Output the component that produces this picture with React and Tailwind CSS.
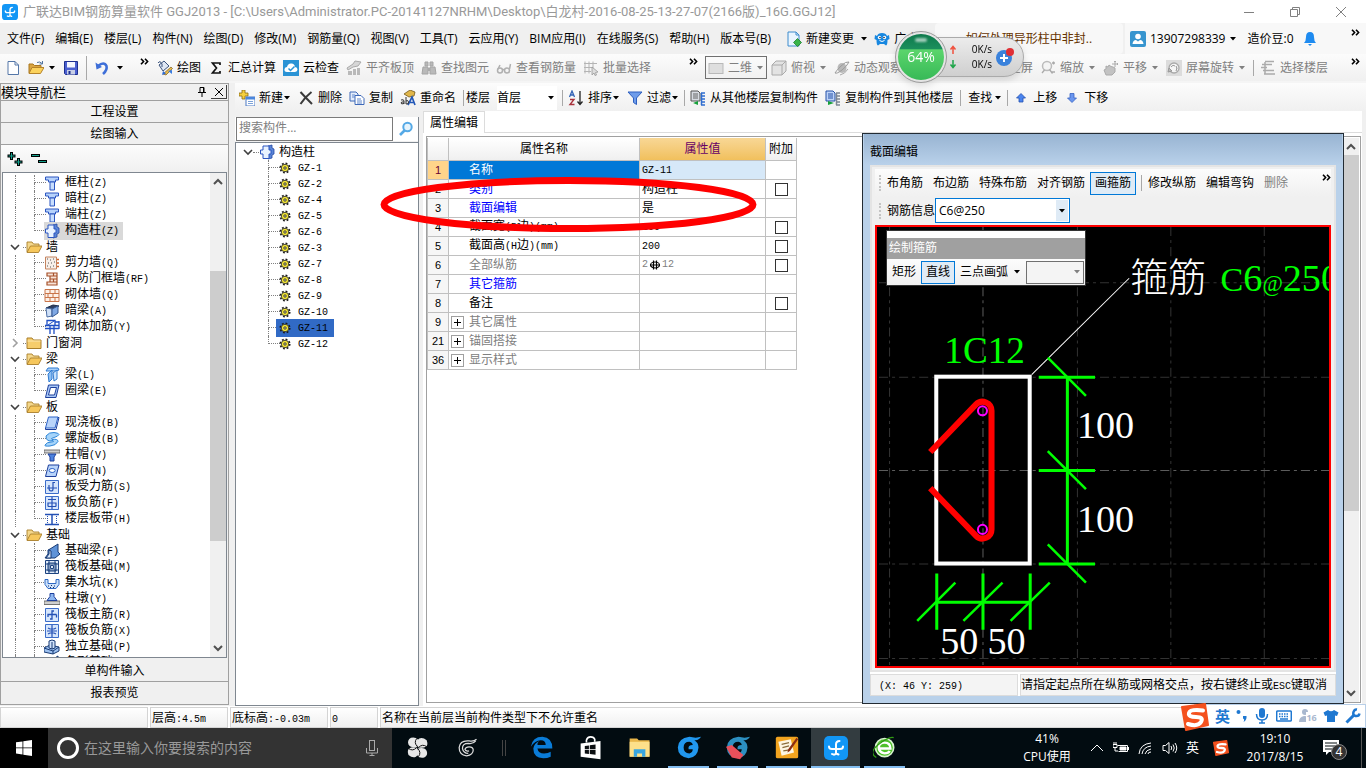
import React from "react";

const Caret = ({ className = "" }) => (
    <svg className={`w-2 h-1 shrink-0 ${className}`} viewBox="0 0 8 4" fill="currentColor">
        <path d="M1 0h6L4 3.5z" />
    </svg>
);

const More = ({ className = "" }) => (
    <button aria-label="更多" className={`shrink-0 ${className}`}>
        <svg className="w-[9px] h-[7px]" viewBox="0 0 9 7" fill="none" stroke="#000" strokeWidth="1.6">
            <path d="M1 .7l2.6 2.8L1 6.3M5 .7l2.6 2.8L5 6.3" />
        </svg>
    </button>
);

const Sep = ({ className = "" }) => <span className={`w-px h-4 bg-[#a8a8a8] shrink-0 ${className}`} />;

const Grip = () => <span className="w-0.5 h-4 border-l-2 border-dotted border-[#c4c4c4] shrink-0" />;

const Icon = ({ children, className = "w-4 h-4" }) => (
    <svg className={`shrink-0 ${className}`} viewBox="0 0 16 16" fill="none">
        {children}
    </svg>
);

/* Chinese runs at 12px, ascii runs in a half-width mono face */
const Song = ({ children }) =>
    String(children).split(/([\x20-\x7e]+)/).filter(Boolean).map((part, i) =>
        /^[\x20-\x7e]/.test(part)
            ? <span key={i} className="font-['Liberation_Mono',monospace] text-[10px]">{part}</span>
            : <React.Fragment key={i}>{part}</React.Fragment>
    );

const Tool = ({ icon, label, caret, disabled }) => (
    <button className={`flex items-center gap-1 shrink-0 whitespace-nowrap ${disabled ? "text-[#808080]" : "text-black"}`}>
        {icon && <Icon>{icon}</Icon>}
        {label}
        {caret && <Caret />}
    </button>
);

const AppLogo = ({ className }) => (
    <svg className={className} viewBox="0 0 24 24" fill="none" stroke="#fff" strokeWidth="2" strokeLinecap="round">
        <rect width="24" height="24" rx="5" fill="#1296f5" stroke="none" />
        <path d="M12 17.500V8.500q0-3.500 3.500-3.500M5 10.500q0 2.500 3 2.500h8q3 0 3-2.500M12 17.500q-1.500 2-4 .5M12 17.500l2.500 1" />
    </svg>
);

const art = {
    newFile: <><path d="M3 1.500h7l3.500 3.500v9.500H3z" fill="#fff" stroke="#5577a8" /><path d="M10 1.500V5h3.500" stroke="#5577a8" /></>,
    open: <><path d="M1 13V4h4l1.500 1.500H13V8" fill="#d9a441" stroke="#a9761f" /><path d="M1 13.500L4 7.500h12l-3.500 6z" fill="#fbd25c" stroke="#b5832a" /><path d="M9 2.500q3-1.500 5 1M14.500 1v3h-3" stroke="#51749f" /></>,
    save: <><path d="M1.500 1.500h13v13h-12l-1-1z" fill="#4a5fd0" stroke="#1d2f8f" /><path d="M4 2h8v5.500H4z" fill="#f3f6ff" /><path d="M4 10h8v4.500H4z" fill="#c8cfe6" /><path d="M5.500 11h2v3h-2z" fill="#1d2f8f" /></>,
    undo: <><path d="M4 6q6-5 8.500 0 1 4-3.500 8" stroke="#3e6fd8" strokeWidth="2.600" /><path d="M1.500 2.500l1 7 5.500-2.500z" fill="#3e6fd8" /></>,
    paint: <><path d="M2 5l5-4 5 5-6 5z" fill="#dfe7f4" stroke="#3b537d" /><path d="M1 3q2-3 4 1v3" stroke="#3b537d" /><path d="M6 14l8-7 1.500 1.500L9 15z" fill="#e6b94c" stroke="#7a5c1c" strokeWidth=".7" /><path d="M5 15l1-4 3 2.500z" fill="#2f6cd6" /><path d="M11 11l4-1v4z" fill="#3b7de0" /></>,
    sigma: <path d="M12 5V3H4.500l4 5-4 5H12v-2" stroke="#111" strokeWidth="1.700" />,
    cloud: <><rect width="16" height="16" fill="#2a93d5" /><path d="M4 12q-3 0-2.500-3 .5-2 2.500-2 1-4 4.500-3.500 3 .3 3.500 3.500 2.500.3 2.500 2.500T12 12z" fill="#fff" /><path d="M5.500 8.500l2 2 4-4" stroke="#2a93d5" strokeWidth="1.500" /></>,
    slabTop: <><path d="M1 8l6-4 2-3 6 1-3 4-5 1-5 3z" fill="#d6d6d6" stroke="#aaa" /><path d="M2 11h4v4H2zM7 9h3v6H7zM11 8h3v7h-3z" fill="#b9b9b9" /></>,
    binoc: <><path d="M4 2h3v4H4zM9 2h3v4H9zM2 7h5v7H1zM9 7h5l1 7H9z" fill="#b9b9b9" stroke="#a5a5a5" /><path d="M7 8h2v3H7z" fill="#aaa" /></>,
    glasses: <g stroke="#b0b0b0" strokeWidth="1.500"><circle cx="4" cy="10.500" r="2.500" /><circle cx="11" cy="10.500" r="2.500" /><path d="M6.500 10q1-1 2 0M2 9l2-4M13.500 9l1-5" /></g>,
    batch: <><path d="M2 1.500v12M6 1.500v12M10 1.500v7M1 3.500h13M1 7.500h9M1 11.500h7" stroke="#b4b4b4" /><path d="M9 7l6 5-2.500.5 1 2.500-1.500.5-1-2.500L9 15z" fill="#ddd" stroke="#999" strokeWidth=".8" /></>,
    flat: <rect x="1" y="3.500" width="14" height="10" fill="#dedede" stroke="#b9b9b9" />,
    cube: <><path d="M1 5l4-4h10v10l-4 4H1z" fill="#e3e3e3" stroke="#aaa" /><path d="M1 5h10v10M11 5l4-4" stroke="#aaa" /></>,
    orbit: <><ellipse cx="8" cy="8" rx="4.500" ry="5" fill="#b8b8b8" /><path d="M1 13q2 1 7-3t7-8q-3-1-8 4t-6 7z" stroke="#9c9c9c" /><path d="M6 15q5-1 8-6" stroke="#aaa" /></>,
    full: <path d="M1 1h14v12H1zM4 4h8v6H4z" stroke="#aaa" />,
    zoom: <><circle cx="7" cy="6" r="4.500" fill="#f4f4f4" stroke="#bbb" strokeWidth="1.500" /><path d="M4.500 10l-2.500 3M12 3h3M13.500 1.500v3M11 12h4M9.500 9.500l3 4" stroke="#aaa" strokeWidth="1.300" /></>,
    pan: <><path d="M3 15l-2-5 2-1V6l2 1 1-2 2 1.500L10 7l2 1v4l-3 3z" fill="#c2c2c2" stroke="#aaa" /><path d="M12 1v6M9 4h6M11 2l1-1 1 1M14 3l1 1-1 1" stroke="#aaa" /></>,
    rotate: <><path d="M0 0h16v16H0z" fill="#dcdcdc" /><circle cx="8" cy="8" r="5" fill="#f5f5f5" stroke="#aaa" strokeWidth="1.300" /><path d="M2 12l1-4 3 3zM10 6q2 2 0 5" fill="#bbb" stroke="#999" /><path d="M5 7q2-3 4-1" stroke="#999" /></>,
    floors: <path d="M5 1.500h9M2 4.500h10M1 7.500h6M3 10.500h11M4 14h11M5 2v12" stroke="#ababab" strokeWidth="1.500" />,
    create: <><path d="M3 0h3v3h3v3H6v3H3V6H0V3h3z" fill="#f5cf3f" stroke="#8c6a12" strokeWidth=".8" /><path d="M7 7h9v9H7z" fill="#fff" stroke="#4a78c4" /><path d="M7 7h9v2.500H7z" fill="#4a86dd" /><path d="M9 11.500h5M9 13.500h5" stroke="#7ba1d8" /></>,
    remove: <path d="M2.500 2Q7 7 14 14M13.500 2Q7 7 2.500 14" stroke="#3a3a3a" strokeWidth="2" />,
    copy: <><path d="M1 2h6l2 2v7H1z" fill="#e4edfb" stroke="#3d68b8" /><path d="M6 5.500h6l3 3v6H6z" fill="#fff" stroke="#3d68b8" /><path d="M8 9h4M8 11h5M8 13h5M3 5h3M3 7h3" stroke="#5f86cb" /></>,
    rename: <><path d="M4 4l6-4 5 2-1 4-5 1z" fill="#e0b64a" stroke="#74581a" strokeWidth=".8" /><path d="M8 15l4-8 3 8M9.500 12.500h4" stroke="#2358b8" strokeWidth="1.700" /><path d="M1 10q3-1 3 1v3M4 12q-3-.5-3 1t3 .5M6 7v7q3 .5 2.500-2T6 11" stroke="#333" /></>,
    sort: <><path d="M1.500 7L4 1l2.500 6M2.500 5h3" stroke="#3162b5" strokeWidth="1.300" /><path d="M2 9.500h4l-4 5h4.500" stroke="#a8323c" strokeWidth="1.400" /><path d="M12 1v13M9.500 11.500L12 14.500l2.500-3" stroke="#222" strokeWidth="1.300" /></>,
    funnel: <path d="M1 2h14l-5.500 6v6.500l-3-2V8z" fill="#6e9cea" stroke="#2d5fc0" />,
    copyFrom: <><path d="M1 1h7l2 2v8H1z" fill="#d7dbe2" stroke="#555" /><path d="M3 4h5M3 6h5M3 8h5" stroke="#666" /><path d="M11 3h4M11 6h4M11 9h4M11 12h4M11.500 3v12M11 15h4" stroke="#2f6dd0" strokeWidth="1.500" /><path d="M8 11v4l-5-2z" fill="#16a03a" /></>,
    copyTo: <><path d="M1 1h7l2 2v8H1z" fill="#bcd2f7" stroke="#2450a8" /><path d="M3 4h5M3 6h5M3 8h5" stroke="#2450a8" /><path d="M11 3h4M11 6h4M11 9h4M11 12h4M11.500 3v12M11 15h4" stroke="#7d8794" strokeWidth="1.500" /><path d="M3 11v4l6-2z" fill="#16a03a" /></>,
    up: <path d="M8 3.500l4.500 4.500H10v4H6V8H3.500z" fill="#4a84ee" stroke="#2450b0" strokeWidth=".8" />,
    down: <path d="M8 12.500L3.500 8H6V3.500h4V8h2.500z" fill="#6a96ee" stroke="#3763c4" strokeWidth=".8" />,
    docAdd: <><path d="M2 1h8l3 3v11H2z" fill="#e9f5ff" stroke="#3f8ccd" /><path d="M10 1v3h3" stroke="#3f8ccd" /><path d="M11.500 7.500l4 4-4 4-4-4z" fill="#39b54a" stroke="#1d7e2c" strokeWidth=".8" /></>,
    robot: <><path d="M3 5Q4 2 8 2t5 3l2-1 .5 4-2 1q0 5-1.500 5.500L10 13H6l-2 1.500Q2.500 14 2.500 9l-2-1L1 4z" fill="#1787e0" /><circle cx="5.500" cy="6.500" r="1.700" fill="#fff" /><circle cx="10.500" cy="6.500" r="1.700" fill="#fff" /><circle cx="6" cy="6.500" r=".8" fill="#123" /><circle cx="10" cy="6.500" r=".8" fill="#123" /><path d="M5.500 9.500q2.500 2 5 0" stroke="#fff" /></>,
    person: <><rect width="16" height="16" rx="2" fill="#3795cf" /><circle cx="8" cy="5.500" r="2.800" fill="#fff" /><path d="M2.500 13q.5-4 3.500-4l2 1.500L10 9q3 0 3.500 4z" fill="#fff" /></>,
    bell: <><path d="M8 1q4 0 4 5 0 4 2 6H2q2-2 2-6 0-5 4-5z" fill="#1e8bf0" /><path d="M6 13h4l-2 2z" fill="#1e8bf0" /></>,

    folderOpen: <><path d="M1 13V3h5l1.500 2H13v3" fill="#f4d78b" stroke="#a97f2b" strokeWidth=".9" /><path d="M1 13.500L4.500 7H16l-3.500 6.500z" fill="#f6c75c" stroke="#a97f2b" strokeWidth=".9" /></>,
    folder: <><path d="M1 13.500V3h5l1.500 2H15v8.500z" fill="#f6cd6c" stroke="#a97f2b" /><path d="M1.500 6h13" stroke="#fbe7b2" /></>,
    column: <><path d="M1.500 2h13v3h-3v2h-7V5h-3z" fill="#b6d2fb" stroke="#2b55c0" /><path d="M6 7h4.500v8H6z" fill="#c8defd" stroke="#2b55c0" /></>,
    tieColumn: <><path d="M9 2l4-1v3l2 1v5l-2 1v3l-4 1" fill="#5b86d6" stroke="#2347a5" strokeWidth=".8" /><path d="M4 2h6v4h2v4h-2v4.500H4V10H1.500V6H4z" fill="#e8f2ff" stroke="#2b55c0" /></>,
    shearWall: <><path d="M1.500 2h11v12h-11z" fill="#f7efe9" stroke="#c4835e" /><path d="M3 4h1M6 5h1M9 4h1M4 8h1M7 8h1M10 7h1M3 11h1M6 12h1M9 11h1" stroke="#555" /><path d="M13 4.500h2M13 8h2M13 11.500h2" stroke="#d0632c" strokeWidth="1.500" /></>,
    airWall: <path d="M3 2h10v12H3v-3h3V5H3zM6 5h7M6 8h7M6 11h7M9.500 2v3M9.500 8v3" fill="#f8e3d6" stroke="#a6512a" strokeWidth="1.200" />,
    brick: <path d="M1 2.500h14v12H1zM1 6.500h14M1 10.500h14M6 2.500v4M11 2.500v4M4 6.500v4M9 6.500v4M6 10.500v4M11 10.500v4" fill="#fdf0e7" stroke="#c9754a" />,
    hidBeam: <><path d="M2 5l7-3 6 1-7 3z" fill="#2d3f63" stroke="#1e2b46" /><path d="M2 5l6 1v7l-5 1z" fill="#cfe0f7" stroke="#4c6ea6" /><path d="M8 6l6-3v7l-6 4z" fill="#7fa8e4" stroke="#34578f" /></>,
    brickBar: <><path d="M3 1.500h8v5H3zM1 9.500h14M1 6.500h14M6 6v9M10 6v9M11 3h4M15 2v8" stroke="#1f4fc4" strokeWidth="1.300" /><path d="M4 6l6-4" stroke="#1f4fc4" /></>,
    beam: <><path d="M2 4l2-3h10l1 2-4 1z" fill="#a9d0fa" stroke="#2f7ad0" /><path d="M4 7l4-4v9l-3 3z" fill="#8cc0f6" stroke="#2f7ad0" /><path d="M9 6l4-3v9l-3 2z" fill="#c9e3fd" stroke="#2f7ad0" /></>,
    ringBeam: <path d="M4.500 2H15l-3 12.500H1.500zM6.500 4.500L4.500 12h6l2-7.500z" fill="#a9c8f6" stroke="#1d3f9c" fillRule="evenodd" />,
    slab: <><path d="M4.500 2H14l-3 11H1.500z" fill="#b9d4fa" stroke="#2b62c8" /><path d="M1.500 13v1.500H12l3-12H14" stroke="#1d3f9c" /></>,
    spiral: <path d="M2 5q3-4 8-3.500t5 2q-1 2-5 3t-2 2q6-1 6 2-2 4-8 4.500t-5-1q2-3 6-3t2-1.500q-7 2-7-4.500z" fill="#a5d4fa" stroke="#2f86d8" />,
    cap: <><path d="M0 3h16v3H0z" fill="#cfcfcf" stroke="#555" strokeWidth=".8" /><path d="M4 7h8l-2 3v4H6v-4z" fill="#4c83df" stroke="#1d3f9c" /></>,
    hole: <><path d="M4.500 2H15l-3 11.500H1.500z" fill="#b9d4fa" stroke="#1d3f9c" /><ellipse cx="8.200" cy="7.500" rx="3" ry="2" fill="#fff" stroke="#2b62c8" /></>,
    barPlate: <><path d="M1.500 1.500h13v13h-13z" fill="#d6e6fc" stroke="#3b6cc9" /><path d="M3 9h10M5 6v3q0 3 2 3t2-2V3.500h2" stroke="#2451b5" strokeWidth="1.200" /></>,
    barNeg: <><path d="M1.500 1.500h13v13h-13z" fill="#d6e6fc" stroke="#3b6cc9" /><path d="M8 2v12M4 4.500h8M4 11.500h8M4 7.500v4M12 7.500v4M4 8h8" stroke="#2451b5" strokeWidth="1.200" /></>,
    strip: <><path d="M1 3.500h14M1 13.500h14" stroke="#2451b5" strokeWidth="1.600" /><path d="M3.500 5v8M12.500 5v8" stroke="#2451b5" strokeDasharray="1 1" /><path d="M8 4v9" stroke="#2451b5" strokeWidth="1.500" /></>,
    footBeam: <><path d="M6 6l8-5v8l2 2-5 4H1l3-4V7z" fill="#5f93d8" stroke="#193b75" /><path d="M5 7l2 1v7H2l3-4z" fill="#d9e8fb" stroke="#193b75" /></>,
    raft: <path d="M1.500 1.500h13v13h-13zM4 4h8v8H4zM6.500 6.500h3v3h-3zM1 5h14M1 11h14M5 1v14M11 1v14" fill="#dfeaf8" stroke="#1c427f" />,
    pit: <><path d="M1 4.500h3v4h8v-4h3v5l-3 4H4l-3-4z" fill="#cde2fb" stroke="#2d68c4" /><path d="M4 11h1M7 10.500h1M10 11h1M6 12.500h1M9 12.500h1" stroke="#1a2f66" /></>,
    pier: <><path d="M0 10h16v3.500H0z" fill="#cfcfcf" stroke="#555" strokeWidth=".8" /><path d="M6 2.500h4v3l3 4H3l3-4z" fill="#8db6f0" stroke="#1d3f9c" /></>,
    rebar: <><path d="M1.500 1.500h13v13h-13z" fill="#d6e6fc" stroke="#3b6cc9" /><path d="M4 10V7.500h8.500M12.500 7.500v3M10 4H8v8H6" stroke="#2451b5" strokeWidth="1.300" /></>,
    rebarNeg: <><path d="M1.500 1.500h13v13h-13z" fill="#d6e6fc" stroke="#3b6cc9" /><path d="M8 2v12M4 5l2 1h4l2-1M4 11l2-1h4l2 1M3 8h10" stroke="#2451b5" strokeWidth="1.200" /></>,
    pad: <><path d="M0 9l6-3 9 2v4l-6 3-9-2z" fill="#9cc0ef" stroke="#193b75" /><path d="M5 2l3-1 3 1v7l-3 1-3-1zM8 3v7" fill="#cfe2fb" stroke="#193b75" /><path d="M0 9l9 3 6-4M9 12v3" stroke="#193b75" /></>,
    gear: <><circle cx="8" cy="8" r="6.200" stroke="#1a1a1a" strokeWidth="2.400" strokeDasharray="2.400 2.470" /><circle cx="8" cy="8" r="5" fill="#f2e534" stroke="#333" strokeWidth="1.200" /><circle cx="8" cy="8" r="1.600" fill="#fff9a0" stroke="#333" strokeWidth="1.300" /></>,
};

const menus = ["文件(F)", "编辑(E)", "楼层(L)", "构件(N)", "绘图(D)", "修改(M)", "钢筋量(Q)", "视图(V)", "工具(T)", "云应用(Y)", "BIM应用(I)", "在线服务(S)", "帮助(H)", "版本号(B)"];

const moduleTree = [
    { label: "框柱(Z)", icon: "column" },
    { label: "暗柱(Z)", icon: "column" },
    { label: "端柱(Z)", icon: "column" },
    { label: "构造柱(Z)", icon: "tieColumn", active: true, last: true },
    { label: "墙", group: "open" },
    { label: "剪力墙(Q)", icon: "shearWall" },
    { label: "人防门框墙(RF)", icon: "airWall" },
    { label: "砌体墙(Q)", icon: "brick" },
    { label: "暗梁(A)", icon: "hidBeam" },
    { label: "砌体加筋(Y)", icon: "brickBar", last: true },
    { label: "门窗洞", group: "closed" },
    { label: "梁", group: "open" },
    { label: "梁(L)", icon: "beam" },
    { label: "圈梁(E)", icon: "ringBeam", last: true },
    { label: "板", group: "open" },
    { label: "现浇板(B)", icon: "slab" },
    { label: "螺旋板(B)", icon: "spiral" },
    { label: "柱帽(V)", icon: "cap" },
    { label: "板洞(N)", icon: "hole" },
    { label: "板受力筋(S)", icon: "barPlate" },
    { label: "板负筋(F)", icon: "barNeg" },
    { label: "楼层板带(H)", icon: "strip", last: true },
    { label: "基础", group: "open" },
    { label: "基础梁(F)", icon: "footBeam" },
    { label: "筏板基础(M)", icon: "raft" },
    { label: "集水坑(K)", icon: "pit" },
    { label: "柱墩(Y)", icon: "pier" },
    { label: "筏板主筋(R)", icon: "rebar" },
    { label: "筏板负筋(X)", icon: "rebarNeg" },
    { label: "独立基础(P)", icon: "pad" },
    { label: "条形基础(T)", icon: "footBeam" },
];

const components = ["GZ-1", "GZ-2", "GZ-4", "GZ-5", "GZ-6", "GZ-3", "GZ-7", "GZ-8", "GZ-9", "GZ-10", "GZ-11", "GZ-12"];

const properties = [
    { no: 1, name: "名称", value: "GZ-11", selected: true },
    { no: 2, name: "类别", value: "构造柱", check: true, tone: "text-[#0000ff]" },
    { no: 3, name: "截面编辑", value: "是", tone: "text-[#0000ff]" },
    { no: 4, name: "截面宽(B边)(mm)", value: "100", check: true },
    { no: 5, name: "截面高(H边)(mm)", value: "200", check: true },
    { no: 6, name: "全部纵筋", value: "rebar", check: true, tone: "text-[#808080]" },
    { no: 7, name: "其它箍筋", value: "", tone: "text-[#0000ff]" },
    { no: 8, name: "备注", value: "", check: true },
    { no: 9, name: "其它属性", value: "", fold: true, tone: "text-[#808080]" },
    { no: 21, name: "锚固搭接", value: "", fold: true, tone: "text-[#808080]" },
    { no: 36, name: "显示样式", value: "", fold: true, tone: "text-[#808080]" },
];

const Chevron = ({ open = true }) => (
    <svg className="w-2.5 h-2.5 shrink-0" viewBox="0 0 10 10" fill="none" strokeWidth="1.600">
        {open ? <path d="M1 3l4 4 4-4" stroke="#404040" /> : <path d="M3 1l4 4-4 4" stroke="#a0a0a0" />}
    </svg>
);

const Branch = ({ last }) => (
    <span className="flex w-3 h-4 flex-col shrink-0">
        <span className="h-2 border-b border-l border-dotted border-[#808080]" />
        {!last && <span className="flex-1 border-l border-dotted border-[#808080]" />}
    </span>
);

const ScrollBar = ({ thumb }) => (
    <div className="w-4 shrink-0 flex flex-col items-center bg-[#f0f0f0]">
        <svg className="w-4 h-[17px]" viewBox="0 0 16 17" fill="none" stroke="#505050" strokeWidth="2"><path d="M4 11l4-4 4 4" /></svg>
        <div className="flex-1 w-full flex flex-col">{thumb}</div>
        <svg className="w-4 h-[17px]" viewBox="0 0 16 17" fill="none" stroke="#505050" strokeWidth="2"><path d="M4 6l4 4 4-4" /></svg>
    </div>
);

const TitleBar = () => (
    <header className="h-[23px] shrink-0 flex items-center bg-white pl-0.5 pr-5 text-[#999]">
        <AppLogo className="w-4 h-4" />
        <h1 className="ml-[5px] flex-1 truncate text-[13px] font-['Roboto','Noto_Sans_CJK_SC',sans-serif]">广联达BIM钢筋算量软件 GGJ2013 - [C:\Users\Administrator.PC-20141127NRHM\Desktop\白龙村-2016-08-25-13-27-07(2166版)_16G.GGJ12]</h1>
        <div className="flex gap-9">
            {[["最小化", "M0 5.500h10"], ["还原", "M.5 2.500h7v7h-7zM2.500 2V.5h7v7H8"], ["关闭", "M0 0l10 10M10 0L0 10"]].map(([name, d]) => (
                <button key={name} aria-label={name}>
                    <svg className="w-2.5 h-2.5" viewBox="0 0 10 10" fill="none" stroke="#808080"><path d={d} /></svg>
                </button>
            ))}
        </div>
    </header>
);

const MenuBar = () => (
    <nav className="h-[31px] shrink-0 flex items-center text-black">
        <div className="flex-1 flex items-center gap-[11px] pl-[7px] overflow-hidden">
            {menus.map((m) => <button key={m} className="shrink-0 whitespace-nowrap">{m}</button>)}
            <div className="flex items-center gap-1.5 ml-1">
                <Tool icon={art.docAdd} label="新建变更" />
                <Caret />
                <Tool icon={art.robot} label="广小二" />
            </div>
        </div>
        <div className="w-[188px] h-full flex items-center justify-center rounded bg-[#f8f8f8] text-[#663300]">如何处理异形柱中非封..</div>
        <div className="w-[241px] h-full flex items-center gap-3 pl-[5px] pr-1.5 ml-0.5 bg-[#f8f8f8]">
            <Tool icon={art.person} label="13907298339" caret />
            <button className="-ml-0.5 shrink-0">造价豆:0</button>
            <button aria-label="消息" className="-ml-1"><Icon>{art.bell}</Icon></button>
            <More className="ml-auto mb-3" />
        </div>
    </nav>
);

const MainToolbar = () => (
    <div className="h-[29px] shrink-0 flex bg-[#f5f5f5] pb-0.5">
        <div className="w-[153px] flex items-center gap-[7px] pl-[5px] pr-1 bg-linear-to-b from-[#fcfcfc] to-[#f0f0f0]">
            <button aria-label="新建文件"><Icon>{art.newFile}</Icon></button>
            <button aria-label="打开" className="flex items-center gap-1"><Icon>{art.open}</Icon><Caret /></button>
            <button aria-label="保存"><Icon>{art.save}</Icon></button>
            <Sep className="h-6" />
            <button aria-label="撤销" className="flex items-center gap-1.5"><Icon>{art.undo}</Icon><Caret /></button>
            <More className="ml-auto mb-3" />
        </div>
        <div className="w-[549px] flex items-center gap-[7px] pl-1 pr-1 bg-linear-to-b from-[#fcfcfc] to-[#f0f0f0]">
            <Tool icon={art.paint} label="绘图" />
            <Tool icon={art.sigma} label="汇总计算" />
            <Tool icon={art.cloud} label="云检查" />
            <Tool icon={art.slabTop} label="平齐板顶" disabled />
            <Tool icon={art.binoc} label="查找图元" disabled />
            <Tool icon={art.glasses} label="查看钢筋量" disabled />
            <Tool icon={art.batch} label="批量选择" disabled />
            <More className="ml-auto mb-3" />
        </div>
        <div className="flex-1 flex items-center gap-[7px] pl-[3px] pr-1.5 bg-linear-to-b from-[#fcfcfc] to-[#f0f0f0]">
            <button className="w-[62px] h-[23px] -mr-[3px] px-0.5 flex items-center justify-between shrink-0 border border-[#707070] text-[#808080]">
                <Icon>{art.flat}</Icon>二维<Caret />
            </button>
            <Tool icon={art.cube} label="俯视" caret disabled />
            <Tool icon={art.orbit} label="动态观察" disabled />
            <span className="w-[73px] shrink-0" />
            <Tool icon={art.full} label="全屏" disabled />
            <Tool icon={art.zoom} label="缩放" caret disabled />
            <Tool icon={art.pan} label="平移" caret disabled />
            <Tool icon={art.rotate} label="屏幕旋转" caret disabled />
            <div className="flex items-center gap-1.5">
                <Sep />
                <Tool icon={art.floors} label="选择楼层" disabled />
            </div>
            <More className="ml-auto mb-3" />
        </div>
    </div>
);

const ComponentToolbar = () => (
    <div className="h-7 shrink-0 flex items-center gap-[7px] pl-1 pt-0.5 bg-linear-to-b from-[#fcfcfc] to-[#f0f0f0]">
        <div className="flex items-center"><Tool icon={art.create} label="新建" /><Caret /></div>
        <Tool icon={art.remove} label="删除" />
        <Tool icon={art.copy} label="复制" />
        <Tool icon={art.rename} label="重命名" />
        <div className="flex items-center gap-0.5">
            <Sep />
            <label htmlFor="floor" className="shrink-0">楼层</label>
        </div>
        <div className="flex items-center gap-[5px]">
            <div className="flex items-center bg-white pr-0.5">
                <select id="floor" className="w-[50px] h-6 appearance-none bg-white">
                    <option>首层</option>
                </select>
                <Caret />
            </div>
            <Sep />
            <div className="flex items-center"><Tool icon={art.sort} label="排序" /><Caret /></div>
        </div>
        <div className="flex items-center gap-[5px]">
            <div className="flex items-center"><Tool icon={art.funnel} label="过滤" /><Caret /></div>
            <Sep />
            <Tool icon={art.copyFrom} label="从其他楼层复制构件" />
        </div>
        <Tool icon={art.copyTo} label="复制构件到其他楼层" />
        <Sep />
        <div className="flex items-center gap-[5px]">
            <div className="flex items-center gap-0.5"><Tool label="查找" /><Caret /></div>
            <Sep />
            <Tool icon={art.up} label="上移" />
        </div>
        <Tool icon={art.down} label="下移" />
    </div>
);

const navButton = "h-[22px] shrink-0 border-b border-[#a0a0a0] text-center leading-[22px]";

const ModulePanel = () => (
    <aside className="w-[229px] shrink-0 flex flex-col border border-[#a0a0a0] mb-px">
        <div className="h-[17px] shrink-0 flex items-center pr-px border-b border-[#a0a0a0]">
            <h2 className="flex-1 leading-4 text-[13px]">模块导航栏</h2>
            <button aria-label="固定" className="mr-1">
                <svg className="w-2.5 h-2.5" viewBox="0 0 10 10" fill="none" stroke="#000"><path d="M3 .5h4v5H3zM6.500.5v5M1 5.500h8M5 6v4" /></svg>
            </button>
            <button aria-label="关闭面板" className="w-4 h-3.5 flex items-center justify-center border-r border-b border-[#404040]">
                <svg className="w-2 h-2" viewBox="0 0 8 8" fill="none" stroke="#000"><path d="M0 0l8 8M8 0L0 8" /></svg>
            </button>
        </div>
        <button className={navButton}>工程设置</button>
        <button className={navButton}>绘图输入</button>
        <div className="h-[27px] shrink-0 flex items-center gap-2 pl-1.5 bg-linear-to-b from-[#fcfcfc] to-[#f0f0f0]">
            <button aria-label="全部展开">
                <svg className="w-4 h-4" viewBox="0 0 16 16" fill="none">
                    <path d="M4.500 1v8M.5 5h8M11.500 7v8M7.500 11h8" stroke="#000" strokeWidth="3" />
                    <path d="M4.500 2v6M1.500 5h6M11.500 8v6M8.500 11h6" stroke="#12a08c" />
                </svg>
            </button>
            <button aria-label="全部折叠">
                <svg className="w-4 h-4" viewBox="0 0 16 16" fill="none">
                    <path d="M0 4.500h9M7 10.500h9" stroke="#000" strokeWidth="3" />
                    <path d="M1 4.500h7M8 10.500h7" stroke="#12a08c" />
                </svg>
            </button>
        </div>
        <div className="flex-1 basis-0 min-h-0 mx-px flex border border-[#7f8790] bg-white">
            <ul className="flex-1 overflow-hidden pt-0.5">
                {moduleTree.map((n) => n.group ? (
                    <li key={n.label} className="h-4 flex items-center pl-[7px]">
                        <Chevron open={n.group === "open"} />
                        <span className="w-[3px] ml-[3px] border-t border-dotted border-[#808080]" />
                        <Icon>{n.group === "open" ? art.folderOpen : art.folder}</Icon>
                        <button className="ml-1 leading-4">{n.label}</button>
                    </li>
                ) : (
                    <li key={n.label} className="h-4 flex items-center pl-3">
                        <span className="w-[19px] h-4 shrink-0 border-l border-dotted border-[#808080]" />
                        <Branch last={n.last} />
                        <button className={`-ml-0.5 flex items-center gap-1 pr-1 leading-4 whitespace-nowrap ${n.active ? "bg-[#d9d9d9]" : ""}`}>
                            <Icon>{art[n.icon]}</Icon>
                            <span className="pl-px"><Song>{n.label}</Song></span>
                        </button>
                    </li>
                ))}
            </ul>
            <ScrollBar thumb={<><div className="grow-[81]" /><div className="grow-[271] bg-[#cdcdcd]" /><div className="grow-[99]" /></>} />
        </div>
        <button className={`${navButton} mt-0.5`}>单构件输入</button>
        <button className="h-[22px] shrink-0 leading-[22px]">报表预览</button>
    </aside>
);

const ComponentPanel = () => (
    <section className="w-[184px] shrink-0 flex flex-col mt-1.5 border-r border-b border-[#7f8790]">
        <div className="flex pl-px bg-white">
            <input aria-label="搜索构件" placeholder="搜索构件..." className="w-[157px] h-6 border border-[#7a7a7a] px-0.5 pb-1 placeholder:text-[#808080]" />
            <button aria-label="搜索" className="flex-1 flex items-center justify-center">
                <svg className="w-4 h-4" viewBox="0 0 16 16" fill="none" stroke="#55a9e6" strokeWidth="2"><circle cx="9.500" cy="6" r="4.200" fill="#e6f4fd" /><path d="M6.500 9.500L2 14" strokeWidth="2.600" /></svg>
            </button>
        </div>
        <ul className="flex-1 mt-px border-t border-l border-[#7f8790] bg-white pt-px">
            <li className="h-4 flex items-center pl-[7px]">
                <Chevron />
                <span className="w-1.5 border-t border-dotted border-[#808080]" />
                <Icon>{art.tieColumn}</Icon>
                <button className="ml-1 leading-4">构造柱</button>
            </li>
            {components.map((c, i) => (
                <li key={c} className="h-4 flex items-center pl-8">
                    <Branch last={i === components.length - 1} />
                    <button className={`flex items-center gap-1.5 -ml-1 pl-[3px] pr-1.5 leading-4 ${c === "GZ-11" ? "bg-[#316ac5]" : ""}`}>
                        <Icon className="w-3 h-3">{art.gear}</Icon>
                        <span className="pl-px"><Song>{c}</Song></span>
                    </button>
                </li>
            ))}
        </ul>
    </section>
);

const th = "h-[23px] border-r border-b border-[#c0c0c0] font-normal";
const td = "h-[19px] border-r border-b border-[#c0c0c0] p-0 leading-4";

const PropertyTable = () => (
    <table className="w-[370px] table-fixed border-separate border-spacing-0 border-l border-[#c0c0c0]">
        <colgroup>
            <col className="w-[21px]" />
            <col className="w-[191px]" />
            <col className="w-[126px]" />
            <col className="w-[31px]" />
        </colgroup>
        <thead>
            <tr className="bg-linear-to-b from-white to-[#efefef]">
                <th className={th}></th>
                <th className={th}>属性名称</th>
                <th className={`${th} bg-linear-to-b from-[#f8d795] to-[#f1c05c] text-[#660066]`}>属性值</th>
                <th className={`${th} p-0`}>附加</th>
            </tr>
        </thead>
        <tbody>
            {properties.map((p) => (
                <tr key={p.no}>
                    <td className={`${td} text-center text-[11px] font-['Liberation_Sans',sans-serif] ${p.selected ? "bg-[#ffd48a] text-[#660033]" : "bg-[#f6f6f6]"}`}>{p.no}</td>
                    <td className={`${td} ${p.selected ? "bg-[#0078d7] text-white" : p.tone || ""}`}>
                        <div className="flex items-center">
                            <span className="w-5 flex pl-0.5">
                                {p.fold && (
                                    <button aria-label={`展开${p.name}`} className="w-[13px] h-[13px] flex items-center justify-center border border-[#a0a0a0]">
                                        <svg className="w-[7px] h-[7px]" viewBox="0 0 7 7" stroke="#000"><path d="M0 3.500h7M3.500 0v7" /></svg>
                                    </button>
                                )}
                            </span>
                            <span><Song>{p.name}</Song></span>
                        </div>
                    </td>
                    <td className={`${td} pl-0.5 ${p.selected ? "bg-[#d6e8f8]" : ""}`}>
                        {p.value === "rebar" ? (
                            <span className="flex items-center text-[#808080]">
                                <Song>2</Song>
                                <svg className="w-3 h-3 mx-px" viewBox="0 0 12 12" fill="none" stroke="#000" strokeWidth="1.200"><ellipse cx="6" cy="6" rx="4.500" ry="3" /><path d="M4.500 1.500v9M7.500 1.500v9M1.500 6h9" /></svg>
                                <Song>12</Song>
                            </span>
                        ) : <Song>{p.value}</Song>}
                    </td>
                    <td className={td}>
                        {p.check && <input type="checkbox" aria-label={`${p.name}附加`} className="block mx-auto w-[13px] h-[13px] appearance-none border border-[#333] bg-white" />}
                    </td>
                </tr>
            ))}
        </tbody>
    </table>
);

const SectionCanvas = () => (
    <svg className="w-full h-full block bg-black" viewBox="877 228 452 437" preserveAspectRatio="xMinYMin slice" fill="none">
        <g stroke="#333" strokeDasharray="9 4 3 4">
            {[889, 1076, 1169, 1262].map((x) => <path key={x} d={`M${x}.5 228V665`} />)}
            {[283, 377, 563, 657].map((y) => <path key={y} d={`M879 ${y}.5H1327`} />)}
            <path d="M982.500 228V665M879 470.500H1327" stroke="#5c5c5c" />
        </g>
        <path d="M1031 375L1128 279" stroke="#fff" />
        <rect x="936" y="377" width="93" height="186" stroke="#fff" strokeWidth="4" />
        <g stroke="#0f0" strokeWidth="3">
            <path d="M1066.500 377V563M1038 377.500h56M1038 470.500h56M1038 563.500h56" />
            <path d="M936 601.500h93M936.500 573v56M982.500 573v56M1029.500 573v56" />
            <path d="M1047 358l38 38M1047 451l38 38M1047 544l38 38M917 620l38-38M963 620l39-38M1010 620l39-38" strokeWidth="2.500" />
        </g>
        <path d="M930 452L975.600 404.600A9 9 0 0 1 991 411V529A9 9 0 0 1 975.600 535.400L930 488" stroke="#f00" strokeWidth="6" />
        <g stroke="#f0f" strokeWidth="2">
            <circle cx="982" cy="411" r="4.500" />
            <circle cx="982" cy="529" r="4.500" />
        </g>
        <g fill="#fff" className="font-['Liberation_Serif','Noto_Sans_CJK_SC',serif]" fontSize="38">
            <text x="1076" y="438">100</text>
            <text x="1076" y="532">100</text>
            <text x="940" y="653">50</text>
            <text x="987" y="653">50</text>
            <text x="1129" y="292" fontWeight="300">箍筋</text>
            <text x="944" y="363" fill="#0f0" fontSize="37">1C12</text>
            <text x="1219" y="292" fill="#0f0"><tspan fontSize="34">C</tspan>6<tspan fontSize="22">@</tspan>250</text>
        </g>
    </svg>
);

const StirrupPalette = () => (
    <div className="absolute left-[9px] top-[3px] w-[200px] border border-[#333] bg-[#f0f0f0]">
        <div className="h-[7px] bg-white" />
        <h3 className="h-[21px] pl-0.5 leading-5 bg-[#a0a0a0] text-white">绘制箍筋</h3>
        <div className="h-[26px] flex items-center justify-between pl-[5px] pr-px bg-linear-to-b from-[#fcfcfc] to-[#f0f0f0]">
            <button>矩形</button>
            <button className="h-[23px] px-1 border border-[#0078d7] bg-[#dfebf6]">直线</button>
            <button>三点画弧</button>
            <Caret />
            <div className="flex items-center w-[58px] h-[23px] pr-0.5 border border-[#707070] bg-[#f4f4f4]">
                <select aria-label="画弧方式" className="flex-1 min-w-0 h-5 appearance-none"></select>
                <Caret className="text-[#808080]" />
            </div>
        </div>
    </div>
);

const SectionDialog = () => (
    <section className="absolute right-px -top-1 -bottom-0.5 w-[482px] flex flex-col border border-[#222b33] bg-[#b9d1ea] px-[7px] pb-[7px]">
        <h2 className="h-[31px] -mx-1.5 shrink-0 px-1.5 leading-9 bg-linear-to-b from-[#98b4d2] to-[#b9d1ea]">截面编辑</h2>
        <div className="flex-1 min-h-0 flex flex-col border-2 border-[#e4e4e4] bg-[#f0f0f0] px-[3px] pb-0.5">
            <div className="h-7 mt-0.5 shrink-0 flex items-center gap-2.5 pl-1 bg-linear-to-b from-[#fcfcfc] to-[#f0f0f0]">
                <div className="flex items-center gap-1.5"><Grip /><button>布角筋</button></div>
                <button>布边筋</button>
                <button>特殊布筋</button>
                <button>对齐钢筋</button>
                <button className="-mx-[5px] h-[23px] px-1 border border-[#0078d7] bg-[#dfebf6]">画箍筋</button>
                <div className="flex items-center gap-1.5"><Sep /><button>修改纵筋</button></div>
                <button>编辑弯钩</button>
                <button className="text-[#808080]">删除</button>
                <More className="ml-auto mb-3" />
            </div>
            <div className="h-7 shrink-0 flex items-center pl-1 pb-px">
                <Grip />
                <label htmlFor="bar-info" className="ml-1.5">钢筋信息</label>
                <div className="w-[135px] h-[25px] flex border border-[#0078d7] bg-white p-px">
                    <select id="bar-info" className="flex-1 min-w-0 appearance-none bg-white pl-0.5">
                        <option>C6@250</option>
                    </select>
                    <span className="w-3 flex items-center justify-center bg-[#dfebf6]"><Caret /></span>
                </div>
            </div>
            <div className="relative flex-1 min-h-0 border-2 border-[#f00]">
                <SectionCanvas />
                <StirrupPalette />
            </div>
        </div>
        <div className="h-6 shrink-0 flex gap-0.5 pt-0.5 bg-white leading-5">
            <span className="w-[148px] pl-2 border border-[#dcdcdc] bg-[#f4f4f4]"><Song>(X: 46 Y: 259)</Song></span>
            <span className="flex-1 overflow-hidden whitespace-nowrap border border-[#dcdcdc] bg-[#f4f4f4]"><Song>请指定起点所在纵筋或网格交点，按右键终止或ESC键取消</Song></span>
        </div>
    </section>
);

const PropertyPanel = () => (
    <section className="flex-1 min-w-0 ml-1 mr-1 flex flex-col bg-white">
        <div className="flex h-[22px] shrink-0 border-b border-[#dcdcdc]">
            <button className="h-[22px] px-1.5 border border-b-0 border-[#dcdcdc] bg-white">属性编辑</button>
        </div>
        <div className="relative flex-1 mt-[3px] ml-[3px] mr-px mb-[3px] flex justify-between border border-[#a0a0a0]">
            <div className="pt-px"><PropertyTable /></div>
            <div className="flex pt-px pr-px">
                <ScrollBar thumb={<><div className="grow-[355] bg-[#cdcdcd]" /><div className="grow-[174]" /></>} />
            </div>
            <div className="absolute inset-y-0 right-[15px]"><SectionDialog /></div>
        </div>
    </section>
);

const StatusBar = () => {
    const cell = "h-[21px] px-px border border-[#d4d4d4] bg-linear-to-b from-white to-[#f0f0f0] leading-5 whitespace-nowrap";
    return (
        <div className="relative h-[22px] shrink-0 flex gap-0.5 pt-px bg-white">
            <span className={`${cell} w-[148px]`}></span>
            <span className={`${cell} w-[78px]`}><Song>层高:4.5m</Song></span>
            <span className={`${cell} w-[98px]`}><Song>底标高:-0.03m</Song></span>
            <span className={`${cell} w-12`}><Song>0</Song></span>
            <span className={`${cell} flex-1`}>名称在当前层当前构件类型下不允许重名</span>
            <InputMethodBar />
        </div>
    );
};

const SogouMark = ({ className }) => (
    <svg className={className} viewBox="0 0 28 28" fill="none">
        <path d="M1 4L24 1l3 21L5 27z" fill="#f4511e" stroke="#f4511e" strokeLinejoin="round" strokeWidth="2" />
        <path d="M22 7.500Q9 6 8 10t7 4 5 5-13 2" stroke="#fff" strokeWidth="4" strokeLinecap="round" />
    </svg>
);

const InputMethodBar = () => (
    <div className="absolute right-0 bottom-0 h-6 w-[172px] flex items-center justify-between pl-5 pr-1 border border-[#b8cfe8] bg-white text-[#1f78d1]">
        <SogouMark className="absolute -left-3.5 -top-0.5 w-7 h-7" />
        <button className="text-[15px] font-bold">英</button>
        <svg className="w-3 h-4" viewBox="0 0 12 16" fill="currentColor"><circle cx="2.500" cy="4" r="2" /><path d="M7 8h3.500q.5 4-3 6 1.500-3-.5-3.500z" /></svg>
        <svg className="w-4 h-4" viewBox="0 0 16 16" fill="none" stroke="currentColor" strokeWidth="1.500"><rect x="5" y="0" width="6" height="10" rx="3" fill="currentColor" stroke="none" /><path d="M2.500 6q0 6 5.500 6t5.500-6M8 12v3M5 15h6" /></svg>
        <svg className="w-4 h-4" viewBox="0 0 16 16" fill="none" stroke="currentColor" strokeWidth="1.500"><rect x=".7" y="3" width="14.600" height="10" rx="1" /><path d="M3 6h10M3 8.500h10" strokeDasharray="1.500 1" /><path d="M4 11h8" /></svg>
        <span className="flex items-end text-[#a9b8cf]">
            <svg className="w-3 h-4" viewBox="0 0 12 16" fill="currentColor"><circle cx="7" cy="4" r="3" /><path d="M1 14q0-5 5-6 3 0 5 1v5z" /></svg>
            <span className="-ml-1 text-[9px] leading-3 font-bold bg-white">16</span>
        </span>
        <svg className="w-4 h-4" viewBox="0 0 16 16" fill="currentColor"><path d="M5 2q3 2.500 6 0l4.500 2.500-1.500 3.500-2-.5V14H4V7.500L2 8 .5 4.500z" /></svg>
        <svg className="w-4 h-4" viewBox="0 0 16 16" fill="none" stroke="currentColor" strokeWidth="3"><path d="M1.500 14.500L9 7" /><path d="M14.500 5.500q-.5 3-4 2.500-3-1-2-4t3.500-2.500" strokeWidth="2.400" /></svg>
    </div>
);

const taskIcons = [
    { name: "四叶草", art: <g fill="#e8e8e8"><path d="M16 15Q7 17 5 12t3-8q6-1 8 2t0 9z" /><path d="M17 16Q14 7 18 5t9 2q2 6-1 8t-9 1z" /><path d="M16 17q9-2 11 3t-3 8q-6 1-8-2t0-9z" /><path d="M15 16q3 9-1 11t-9-2q-2-6 1-8t9-1z" /><path d="M16 15q-5-5-1-10M17 16q5-5 10-1M16 17q5 5 1 10M15 16q-5 5-10 1" fill="none" stroke="#111" strokeWidth="1.200" /></g> },
    { name: "旋风", art: <g fill="none" stroke="#ddd" strokeWidth="1.500"><path d="M28 6q-3 3-9 2-11-1-12 8 0 9 9 10 8-1 8-7 0-4-5-4-4 0-5 3 1 3 5 2" /><path d="M27 8q-3 4-9 3-7 0-7 6 1 6 7 6" /></g> },
    { name: "Edge", art: <path d="M3 15Q5 3 17 3q12 1 12 14H11q1 6 8 6 5 0 8-2v6q-4 2-9 2-12-1-12-12 1-6 7-9-3 3-2 5h10q0-6-6-6-7 0-12 8z" fill="#0a7cd8" /> },
    { name: "应用商店", art: <><path d="M4 11l24-3v22L4 27z" fill="#fff" /><path d="M11 10V7q1-4 5-4t5 3v3" fill="none" stroke="#fff" strokeWidth="2" /><path d="M9 14l5-.6v4.600H9zM15 13.200l7-1V18h-7zM9 19h5v4.600L9 23zM15 19h7v5.600l-7-.8z" fill="#0b0f12" /></> },
    { name: "文件资源管理器", art: <><path d="M4 5h9l2 2h13v20H4z" fill="#e9b64a" /><path d="M4 9h24v18H4z" fill="#fde08a" /><path d="M9 27v-9h14v9h-4v-4h-6v4z" fill="#38a5e0" /></> },
    { name: "浏览器", running: true, art: <path d="M31 3q-3 5-8 4 5 3 5 9-1 12-12 13Q3 27 3 16T17 3q8 2 14 0zM17 9q-7 0-7 7t7 7q4-1 4-5h-5q-1-5 5-5 0-3-4-4z" fill="#2197ee" fillRule="evenodd" /> },
    { name: "图形算量", running: true, art: <><path d="M31 3q-3 5-8 4 5 3 5 9-1 12-12 13Q3 27 3 16T17 3q8 2 14 0zM17 9q-7 0-7 7t7 7q4-1 4-5h-5q-1-5 5-5 0-3-4-4z" fill="#2c8fc0" fillRule="evenodd" /><path d="M2 15l7-2 14 12-4 5-10-2z" fill="#e8505b" /></> },
    { name: "记事", running: true, art: <><rect x="3" y="3" width="27" height="26" rx="2" fill="#f2a41f" /><path d="M6 9l15-3 4 16-15 4z" fill="#fdf6e3" /><path d="M10 12l9-2M11 16l8-2M12 20l6-1" stroke="#8a6d3b" strokeWidth="1.500" /><path d="M28 4L18 18l-1 4 3-2L30 6z" fill="#8b2e12" /></> },
    { name: "广联达", running: true, active: true },
    { name: "360浏览器", running: true, art: <><circle cx="16" cy="16" r="11" fill="#4fc12b" stroke="#d8f2cf" strokeWidth="2" /><path d="M9 17h14q0-7-7-7t-7 6 7 7q5 0 6-3" fill="none" stroke="#fff" strokeWidth="3" /><path d="M27 4Q22 2 9 12T6 28" fill="none" stroke="#2f9a14" strokeWidth="1.500" /></> },
];

const Taskbar = () => (
    <footer className="h-10 shrink-0 flex items-stretch bg-[#020c11] text-white">
        <button aria-label="开始" className="w-12 flex items-center justify-center bg-black">
            <svg className="w-4 h-4" viewBox="0 0 16 16" fill="#fff"><path d="M0 2.300L6.500 1.400v6.100H0zM7.300 1.300L16 0v7.500H7.300zM0 8.300h6.500v6.200L0 13.600zM7.300 8.300H16V16l-8.700-1.300z" /></svg>
        </button>
        <div className="w-[344px] flex items-center bg-[#333] pl-2 pr-3.5">
            <svg className="w-6 h-6 shrink-0" viewBox="0 0 24 24" fill="none" stroke="#fff" strokeWidth="3"><circle cx="12" cy="12" r="9.500" /></svg>
            <input aria-label="搜索" placeholder="在这里输入你要搜索的内容" className="flex-1 min-w-0 ml-1 text-sm placeholder:text-[#999]" />
            <svg className="w-3 h-4" viewBox="0 0 12 16" fill="none" stroke="#aaa"><rect x="3.500" y=".5" width="5" height="10" /><path d="M.5 8v5h11V8M6 13v3M3.500 15.500h5" /></svg>
        </div>
        <div className="flex pl-px">
            {taskIcons.map((t, i) => (
                <React.Fragment key={t.name}>
                    <button
                        aria-label={t.name}
                        className={`relative w-[49px] flex items-center justify-center ${t.active ? "bg-[#333c40]" : ""}`}
                    >
                        {t.active ? <AppLogo className="w-6 h-6" /> : <svg className="w-6 h-6" viewBox="2 2 29 29">{t.art}</svg>}
                        {t.running && <span className={`absolute bottom-0 h-0.5 bg-[#83bdf0] ${t.active ? "inset-x-0" : "inset-x-1"}`} />}
                    </button>
                    {i === 1 && <span className="w-1 h-4 mx-[11px] self-center border-x border-[#444]" />}
                </React.Fragment>
            ))}
        </div>
        <div className="ml-auto flex items-center">
            <div className="w-[68px] text-center leading-[18px]">41%<br />CPU使用</div>
            <div className="flex items-center gap-2 ml-2.5">
                <svg className="w-3 h-3" viewBox="0 0 12 12" fill="none" stroke="#fff"><path d="M0 9l6-6 6 6" /></svg>
                <svg className="w-4 h-4 ml-0.5" viewBox="0 0 16 16" fill="none" stroke="#fff"><path d="M4.500 5.500h10v6h-9M15.500 7v3M0 4.500h4v3H0zM1 4V2M3 4V2M2 8v3h3" /><path d="M7 7h6v3H7z" fill="#fff" /></svg>
                <svg className="w-4 h-4 ml-px" viewBox="0 0 16 16" fill="none" stroke="#fff"><path d="M1 14Q2 4 13 3M4 14q1-7 9-8M7 14q1-4 6-5M10 14q0-2 3-2" /></svg>
                <svg className="w-4 h-4" viewBox="0 0 16 16" fill="none" stroke="#fff"><path d="M1 5.500h2.500L7 2.500v11l-3.500-3H1zM9 6q1.500 2 0 4M11 4.500q2.500 3.500 0 7M13 3q3.500 5 0 10" /></svg>
                <span className="text-[13px]">英</span>
            </div>
            <SogouMark className="w-4 h-4 ml-3.5" />
            <div className="w-[76px] ml-2 text-center leading-[18px]">19:10<br />2017/8/15</div>
            <button aria-label="4 条通知" className="relative ml-2.5 mr-3.5 w-6 h-6">
                <svg className="w-4 h-4" viewBox="0 0 16 16"><path d="M0 0h16v12H6l-3 3v-3H0z" fill="#fff" /><path d="M2 3h12M2 6h12M2 9h12" stroke="#020c11" /></svg>
                <span className="absolute right-0 bottom-0 w-4 h-4 rounded-full border border-[#888] bg-[#333] leading-[14px]">4</span>
            </button>
            <span className="w-px h-full mr-1 bg-[#555]" />
        </div>
    </footer>
);

const SpeedBall = () => (
    <div className="absolute left-[896px] top-8 flex items-center drop-shadow-md">
        <div className="relative z-10 w-[50px] h-[50px] rounded-full border-2 border-[#e4e4e4] outline outline-[#9a9a9a] bg-[linear-gradient(#0e7a4c_0%,#1c8f5d_33%,#5bd56c_34%,#37b957_100%)] flex items-center justify-center text-sm text-white">
            64%
            <span className="absolute top-1 w-3 h-1 rounded-full bg-white/60 blur-[1px]" />
        </div>
        <div className="w-[102px] h-[40px] -ml-6 pl-[26px] pr-2 flex items-center justify-between rounded-r-full border border-[#aaa] bg-linear-to-b from-[#ececec] to-[#cfcfcf] text-[10px]">
            <svg className="w-2 h-6" viewBox="0 0 8 24" fill="none" strokeWidth="1.500"><path d="M4 9V2M1.500 4.500L4 1.500l2.500 3" stroke="#f0523f" /><path d="M4 15v7M1.500 19.500l2.500 3 2.500-3" stroke="#1fa54a" /></svg>
            <div className="ml-3 leading-[15px]">0K/s<br />0K/s</div>
            <svg className="w-5 h-5" viewBox="0 0 20 20"><circle cx="9" cy="11" r="8" fill="#3a82dc" /><path d="M9 7v8M5 11h8" stroke="#fff" strokeWidth="2" /><circle cx="15" cy="5" r="4" fill="#e02f35" /></svg>
        </div>
    </div>
);

/* hand-drawn highlight over rows 2-4 of the property table */
const Highlight = () => (
    <svg className="absolute left-[380px] top-[176px] w-[378px] h-[57px] pointer-events-none" viewBox="0 0 378 57" fill="none">
        <ellipse cx="188.500" cy="28.500" rx="184.500" ry="24" stroke="#f00" strokeWidth="7" />
    </svg>
);

export default function App() {
    return (
        <div className="relative h-screen flex flex-col overflow-hidden bg-[#f0f0f0] text-xs text-black font-['Open_Sans','Noto_Sans_CJK_SC',sans-serif]">
            <TitleBar />
            <MenuBar />
            <MainToolbar />
            <main className="flex-1 min-h-0 flex">
                <ModulePanel />
                <div className="flex-1 min-w-0 ml-1.5 flex flex-col">
                    <ComponentToolbar />
                    <div className="flex-1 min-h-0 flex">
                        <ComponentPanel />
                        <PropertyPanel />
                    </div>
                </div>
            </main>
            <StatusBar />
            <Taskbar />
            <Highlight />
            <SpeedBall />
        </div>
    );
}
